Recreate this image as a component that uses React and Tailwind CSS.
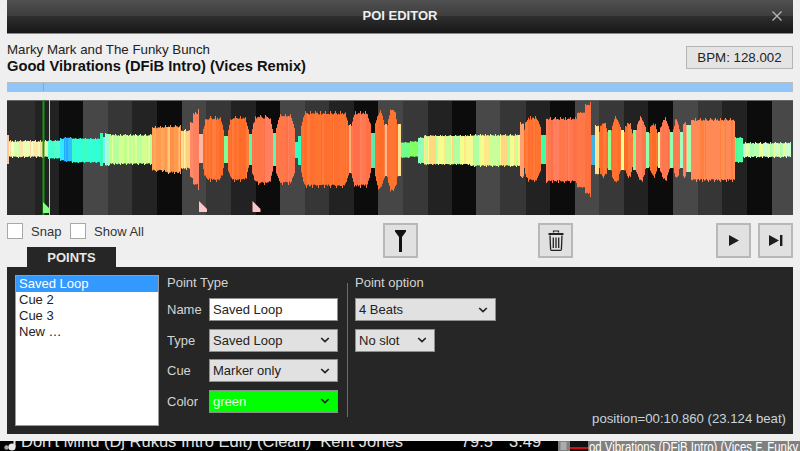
import React from "react";

const stripes = [
  [7, 35, "#2e2e2e"], [35, 59, "#222222"], [59, 83, "#0d0d0d"], [83, 108, "#474747"], [108, 132, "#363636"],
  [132, 157, "#232323"], [157, 182, "#0c0c0c"], [182, 206, "#464646"], [206, 231, "#363636"], [231, 256, "#222222"],
  [256, 280, "#0c0c0c"], [280, 305, "#464646"], [305, 329, "#363636"], [329, 354, "#222222"], [354, 378, "#0c0c0c"],
  [378, 403, "#464646"], [403, 428, "#383838"], [428, 452, "#222222"], [452, 476, "#0c0c0c"], [476, 500, "#484848"],
  [500, 526, "#363636"], [526, 550, "#222222"], [550, 575, "#0c0c0c"], [575, 599, "#484848"], [599, 624, "#383838"],
  [624, 648, "#222222"], [648, 673, "#0c0c0c"], [673, 698, "#484848"], [698, 722, "#363636"], [722, 747, "#222222"],
  [747, 772, "#0c0c0c"], [772, 793, "#484848"],
];

const pale = ["#ffe6a8", "#eaffb4", "#ffd9a0", "#f4ffc0", "#d8ffb0"];
const lime = ["#d4ff90", "#c0ff88", "#e4ff98", "#b8ffa0"];
const yg = ["#f0ff90", "#ffe888", "#c8ff98", "#f8f890", "#ffd880", "#b0ffa0"];
const pg = ["#b8ffb0", "#f0ff98", "#c8ffd0", "#e0ffa8", "#a8ffb0"];
const org = ["#ff7430", "#ff6c28", "#ff7c3c", "#ff7030"];
const red = ["#ff7850", "#ff7048", "#ff8060", "#ff7648"];
const amb = ["#ff9a50", "#ffb060", "#ffc878", "#ff9048"];

/* [from, to, top, bottom, colours, jitter] */
const segs = [
  [7, 9, 135, 164, ["#ffc890"], 0],
  [9, 48, 140, 158, pale, 1.5],
  [48, 60, 140, 159, ["#50ffc8", "#40ffd8"], 1],
  [60, 64, 138, 161, ["#30e8ff"], 1],
  [64, 72, 137, 162, ["#20b0ff", "#28a8ff", "#30c0ff"], 1],
  [72, 100, 138, 163, ["#30ffe8", "#30ffd8", "#38ffc8"], 1],
  [100, 103, 133, 166, ["#30ffb8"], 0],
  [103, 105, 137, 163, ["#80e8ff"], 0],
  [105, 110, 133, 166, ["#a0ffd0"], 1],
  [110, 152, 134, 165, lime, 1.5],
  [152, 165, 126, 172, ["#ff9a50", "#ffa858"], 2],
  [165, 181, 125, 174, amb, 2],
  [181, 190, 129, 170, ["#ffe090", "#ffd080", "#fff0a0"], 2],
  [190, 193, 122, 178, ["#ff8a68"], 1],
  [193, 198, 112, 186, ["#ff8060"], 2],
  [198, 199, 109, 190, ["#ff8060"], 0],
  [199, 203, 134, 163, ["#ffb8a8"], 0],
  [203, 224, 116, 182, org, 3],
  [224, 228, 136, 163, ["#80ff98"], 0],
  [228, 249, 116, 182, org, 3],
  [249, 252, 134, 165, ["#50ffa8"], 0],
  [252, 273, 115, 185, red, 3],
  [273, 276, 133, 166, ["#50ffb0"], 0],
  [276, 295, 114, 185, red, 3],
  [295, 298, 142, 158, ["#30ffc0"], 0],
  [298, 301, 136, 165, ["#30ffc0"], 0],
  [301, 349, 111, 188, org, 3],
  [349, 351, 124, 174, ["#ffb080"], 1],
  [351, 371, 111, 188, red, 3],
  [371, 375, 133, 168, ["#60e8a8"], 0],
  [375, 385, 110, 191, org, 3],
  [385, 387, 124, 176, ["#ffb890"], 0],
  [387, 398, 108, 193, org, 3],
  [398, 401, 124, 176, ["#ffe090"], 0],
  [401, 410, 142, 158, ["#70ff88"], 0.6],
  [410, 418, 141, 157, ["#80ff60"], 0.6],
  [418, 424, 137, 164, ["#90ffb8"], 1],
  [424, 470, 135, 165, yg, 1],
  [470, 520, 134, 167, yg, 1.5],
  [520, 524, 122, 178, ["#ffa070"], 2],
  [524, 541, 116, 182, org, 3],
  [541, 546, 135, 164, ["#40ffa0"], 0],
  [546, 577, 117, 183, red, 2.5],
  [577, 585, 112, 188, ["#ff7848"], 1],
  [585, 590, 104, 194, ["#ff7040"], 1],
  [590, 591, 102, 197, ["#ff7040"], 0],
  [591, 595, 135, 165, ["#40b0e0"], 0],
  [595, 599, 125, 175, ["#f0ff90", "#ffe090"], 1],
  [599, 608, 120, 180, org, 3],
  [608, 611, 130, 170, ["#90ff90"], 0],
  [611, 621, 116, 184, org, 3],
  [621, 624, 130, 170, ["#e8ff90"], 0],
  [624, 633, 120, 180, org, 3],
  [633, 636, 130, 170, ["#80ff90"], 0],
  [636, 646, 116, 183, red, 3],
  [646, 649, 132, 168, ["#90ffb0"], 0],
  [649, 658, 121, 179, org, 3],
  [658, 660, 132, 168, ["#d8ffa0"], 0],
  [660, 670, 117, 182, red, 3],
  [670, 673, 132, 168, ["#90ffb0"], 0],
  [673, 680, 116, 182, red, 3],
  [680, 683, 132, 168, ["#a0ffc0"], 0],
  [683, 686, 122, 178, red, 2],
  [686, 691, 125, 172, ["#a0ffb0", "#ffb080"], 0],
  [691, 735, 118, 182, ["#ff8a58", "#ff8040", "#ff8c50", "#ff7c48"], 2.5],
  [735, 743, 137, 163, ["#40ff90", "#50ffa0"], 1],
  [743, 791, 142, 158, pg, 1.5],
];

function rnd(n) {
  const s = Math.sin(n * 12.9898) * 43758.5453;
  return s - Math.floor(s);
}

function bars() {
  const out = [];
  segs.forEach(([a, b, t, bot, cols, j], si) => {
    let ci = si;
    for (let x = a; x < b; x++) {
      if (rnd(x + 0.5) > 0.7) ci++;
      const edge = Math.min(x - a + 0.5, b - x - 0.5);
      const taper = j >= 3 ? Math.max(0, (5 - edge) / 5) ** 2 * (bot - t) * 0.2 : 0;
      const spikeTop = x % 5 === 0 ? 0 : j * (0.5 + rnd(x) * 0.7);
      const spikeBot = x % 6 === 0 ? 0 : j * (0.5 + rnd(x + 7) * 0.7);
      const y1 = t + taper + spikeTop;
      const y2 = bot - taper - spikeBot;
      out.push(<rect key={x} x={x - 7} y={y1 - 100} width="1" height={y2 - y1} fill={cols[ci % cols.length]} />);
    }
  });
  return out;
}

const Flag = ({ x, fill }) => (
  <polygon points={`${x - 7},101 ${x + 1},109 ${x + 1},112 ${x - 7},112`} fill={fill} />
);

function Waveform() {
  return (
    <svg width="786" height="115" viewBox="0 0 786 115" className="block shrink-0 w-[786px] h-[115px] mt-[8px]">
      {stripes.map(([a, b, c]) => (
        <rect key={a} x={a - 7} y="0" width={b - a} height="115" fill={c} />
      ))}
      <g>{bars()}</g>
      <rect x="0" y="0" width="786" height="1" fill="#666666" />
      <rect x="35.5" y="0" width="2" height="115" fill="#129a12" />
      <rect x="42" y="0" width="1" height="115" fill="#c8c8c8" />
      <polygon points="36,102 42,108 42,113 36,113" fill="#80ff80" />
      <Flag x={199} fill="#ffc4c8" />
      <Flag x={252.5} fill="#ffc4c8" />
    </svg>
  );
}

const Chevron = () => (
  <svg width="10" height="6" viewBox="0 0 10 6" fill="none" className="shrink-0">
    <path d="M1.2 1 L5 4.6 L8.8 1" stroke="#222222" strokeWidth="1.7" />
  </svg>
);

const Select = ({ label, className }) => (
  <div className={`flex items-center justify-between h-[23px] pl-[3px] pr-[7px] bg-[#e1e1e1] border border-[#8f8f8f] text-[#222222] text-[13px] leading-none ${className}`}>
    <span>{label}</span>
    <Chevron />
  </div>
);

const Row = ({ label, children }) => (
  <div className="flex items-center h-[23px]">
    <span className="w-[42px] text-[13px] leading-none text-[#d4d4d4]">{label}</span>
    {children}
  </div>
);

const Btn = ({ children }) => (
  <div className="w-[35px] h-[35px] flex items-center justify-center bg-[#e1e1e1] border-2 border-[#b8b8b8]">{children}</div>
);

const Check = () => <div className="w-[16px] h-[16px] shrink-0 bg-white border border-[#a8a8a8]" />;

export default function App() {
  return (
    <div className="relative w-[800px] h-[451px] overflow-hidden bg-black font-[Liberation_Sans,Arial,sans-serif]">
      <div className="h-[441px] bg-[#efefef] px-[7px] flex flex-col">
        <div className="relative shrink-0 h-[34px] flex items-center justify-center border-b border-[#8a8a8a] bg-[linear-gradient(to_bottom,#505050_0%,#3e3e3e_47%,#2f2f2f_48%,#171717_100%)]">
          <span className="text-[13px] font-bold text-[#eeeeee] leading-none mt-[-3px]">POI EDITOR</span>
          <svg width="12" height="12" viewBox="0 0 12 12" className="absolute right-[10px] top-[10px]">
            <path d="M1.5 1.5 L10.5 10.5 M10.5 1.5 L1.5 10.5" stroke="#b4b4b4" strokeWidth="1.4" />
          </svg>
        </div>

        <div className="flex shrink-0 justify-between items-start mt-[8px] h-[40px]">
          <div className="flex flex-col">
            <span className="text-[13.3px] leading-[16px] text-[#222222]">Marky Mark and The Funky Bunch</span>
            <span className="text-[14.7px] leading-[17px] font-bold text-[#111111]">Good Vibrations (DFiB Intro) (Vices Remix)</span>
          </div>
          <div className="mt-[4px] w-[107px] h-[23px] flex items-center justify-center bg-[#e4e4e4] border border-[#b4b4b4] text-[13.3px] leading-none text-[#222222]">
            BPM: 128.002
          </div>
        </div>

        <div className="relative shrink-0 h-[10px] bg-[#90c5f8] border border-[#bdbdbd]">
          <div className="absolute left-[35px] top-0 bottom-0 w-[1px] bg-[#50d080]" />
        </div>

        <Waveform />

        <div className="relative shrink-0 flex justify-between items-start h-[44px] mt-[8px]">
          <div className="flex items-center h-[16px] text-[13px] leading-none text-[#333333]">
            <Check />
            <span className="ml-[8px] w-[39px]">Snap</span>
            <Check />
            <span className="ml-[8px]">Show All</span>
          </div>
          <div className="absolute left-[376px] top-0"><Btn>
            <svg width="11" height="22" viewBox="0 0 11 22">
              <path d="M0 0 H11 V1.5 L7 7 V22 H4 V7 L0 1.5 Z" fill="#111111" />
            </svg>
          </Btn></div>
          <div className="absolute left-[531px] top-0"><Btn>
            <svg width="16" height="21" viewBox="0 0 16 21" fill="none">
              <path d="M5.5 2.5 V1 H10.5 V2.5" stroke="#222222" strokeWidth="1.2" />
              <path d="M0.5 3 H15.5 V5 H0.5 Z" fill="#222222" />
              <path d="M2 5.5 L2.6 19.5 Q2.7 20.3 3.5 20.3 H12.5 Q13.3 20.3 13.4 19.5 L14 5.5" stroke="#222222" strokeWidth="1.3" />
              <path d="M5.3 7.5 V18 M8 7.5 V18 M10.7 7.5 V18" stroke="#222222" strokeWidth="1.3" />
            </svg>
          </Btn></div>
          <div className="flex gap-[7px]">
            <Btn>
              <svg width="10" height="11" viewBox="0 0 10 11"><path d="M0 0 L10 5.5 L0 11 Z" fill="#1c1c1c" /></svg>
            </Btn>
            <Btn>
              <svg width="14" height="11" viewBox="0 0 14 11"><path d="M0 0 L10 5.5 L0 11 Z" fill="#1c1c1c" /><rect x="11" y="0" width="2.4" height="11" fill="#1c1c1c" /></svg>
            </Btn>
          </div>
        </div>

        <div className="relative shrink-0 h-[167px] bg-[#262626] flex pt-[8px] pl-[8px] pr-[7px]">
          <div className="absolute left-[20px] top-[-20px] w-[89px] h-[20px] bg-[#262626] flex items-center justify-center text-[13px] font-bold text-[#e8e8e8] leading-none">POINTS</div>

          <div className="w-[144px] h-[151px] bg-white border border-[#9a9a9a] text-[13px] leading-[15px] text-[#222222]">
            <div className="bg-[#3399ff] text-white pl-[3px] h-[16px]">Saved Loop</div>
            <div className="pl-[3px] h-[16px]">Cue 2</div>
            <div className="pl-[3px] h-[16px]">Cue 3</div>
            <div className="pl-[3px] h-[16px]">New …</div>
          </div>

          <div className="ml-[8px] w-[171px] flex flex-col">
            <div className="h-[23px] text-[13px] leading-[16px] text-[#d4d4d4]">Point Type</div>
            <div className="flex flex-col gap-[7.5px]">
              <Row label="Name">
                <div className="w-[129px] h-[23px] flex items-center pl-[3px] bg-white border border-[#8f8f8f] text-[13px] leading-none text-[#222222]">Saved Loop</div>
              </Row>
              <Row label="Type"><Select label="Saved Loop" className="w-[129px]" /></Row>
              <Row label="Cue"><Select label="Marker only" className="w-[129px]" /></Row>
              <Row label="Color">
                <div className="w-[129px] h-[23px] flex items-center justify-between pl-[3px] pr-[7px] bg-[#00ff00] border border-[#8f8f8f] text-[13px] leading-none text-[#e8ffe8]">
                  <span>green</span><Chevron />
                </div>
              </Row>
            </div>
          </div>

          <div className="ml-[9px] mt-[8px] w-[1px] h-[134px] bg-[#6c6c6c]" />

          <div className="ml-[7px] flex flex-col">
            <div className="h-[23px] text-[13px] leading-[16px] text-[#d4d4d4]">Point option</div>
            <div className="flex flex-col gap-[7.5px]">
              <Select label="4 Beats" className="w-[141px]" />
              <Select label="No slot" className="w-[80px]" />
            </div>
          </div>

          <div className="absolute right-[7px] bottom-[9px] text-[13.2px] leading-none text-[#c8d4dc]">position=00:10.860 (23.124 beat)</div>
        </div>
        <div className="h-[7px] shrink-0" />
      </div>

      <div className="h-[10px] flex text-[16.5px] leading-[18px] text-[#e0e0e0] overflow-hidden">
        <div className="w-[558px] flex items-start overflow-hidden">
          <svg width="14" height="10" viewBox="0 0 14 10" className="ml-[2px] shrink-0">
            <circle cx="4.5" cy="6.5" r="2.2" fill="#a8a8a8" />
            <circle cx="10" cy="6" r="3.6" fill="#e8e8e8" />
            <rect x="11.5" y="0" width="2" height="6" fill="#e8e8e8" />
          </svg>
          <span className="ml-[5px] mt-[-9px] whitespace-nowrap">Don't Mind (Dj Rukus Intro Edit) (Clean)&nbsp; Kent Jones</span>
          <span className="ml-[58px] mt-[-9px] whitespace-nowrap">79.5</span>
          <span className="ml-[16px] mt-[-9px] whitespace-nowrap">3:49</span>
        </div>
        <div className="flex-1 flex items-start bg-[#808080] text-white overflow-hidden">
          <svg width="7" height="8" viewBox="0 0 7 8" className="ml-[2px] mt-[1px] shrink-0">
            <path d="M0.5 1 H6.5 M0.5 3 H6.5 M0.5 5 H6.5 M0.5 7 H6.5" stroke="#d8d8d8" strokeWidth="1" />
          </svg>
          <span className="ml-[3px] w-[18px] h-[10px] shrink-0 bg-[#111111] flex flex-col justify-end">
            <span className="block h-[2px] mb-[2px] bg-[#cc1111]" />
          </span>
          <span className="ml-[1px] mt-[-3px] text-[15px] whitespace-nowrap inline-block origin-left scale-x-[0.76]">od Vibrations (DFiB Intro) (Vices F. Funky B</span>
        </div>
      </div>
    </div>
  );
}
